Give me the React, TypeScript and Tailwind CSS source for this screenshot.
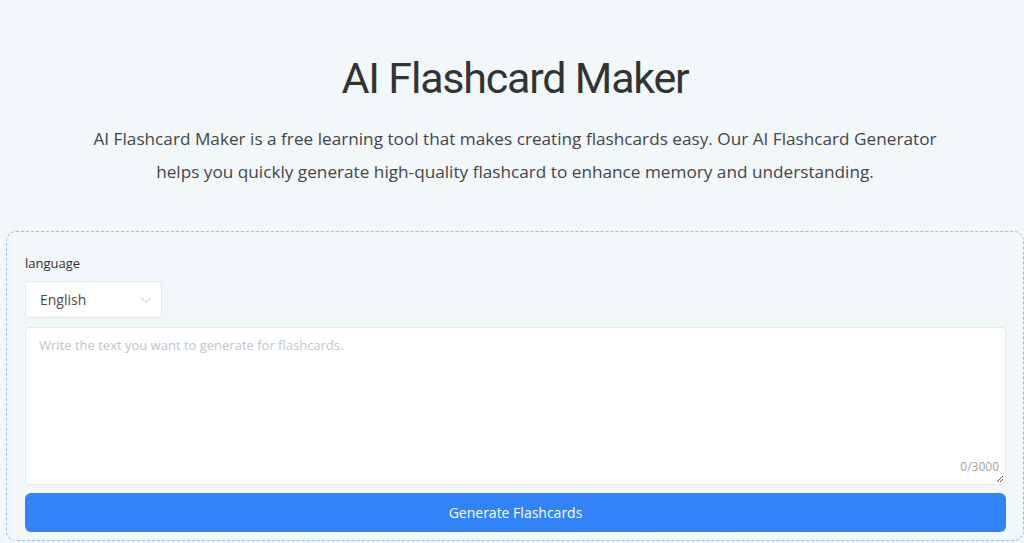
import React from "react";

export default function App() {
  return (
    <div className="min-h-screen bg-[#f2f7fa] font-['Open_Sans',sans-serif]">
      {/* Hero */}
      <div className="pl-[6px] pt-[50px] text-center">
        <h1 className="font-['Roboto',sans-serif] text-[43px] leading-[56px] font-normal tracking-[-1.2px] text-[#333]">
          AI Flashcard Maker
        </h1>
        <p className="mx-auto mt-[16px] max-w-[880px] text-[17.2px] leading-[33px] text-[#454545]">
          AI Flashcard Maker is a free learning tool that makes creating flashcards easy. Our AI Flashcard Generator
          helps you quickly generate high-quality flashcard to enhance memory and understanding.
        </p>
      </div>

      {/* Form card */}
      <div className="ml-[6px] mt-[43px] rounded-[10px] border border-dashed border-[#93bff7] pl-[18px] pr-[17px] pt-[22px] pb-[8px]">
        <div className="text-[13px] leading-[18px] text-[#303133]">language</div>

        <div className="mt-[9px] flex h-[37px] w-[137px] items-center justify-between rounded-[4px] border border-[#e4e7ed] bg-white pl-[14px] pr-[8px]">
          <span className="text-[14px] text-[#4a4a4a]">English</span>
          <svg width="14" height="14" viewBox="0 0 24 24" fill="none" stroke="#b8bcc4" strokeWidth="1.6">
            <path d="M4 8.5l8 7.5 8-7.5" />
          </svg>
        </div>

        <div className="relative mt-[9px] h-[158px] rounded-[4px] border border-[#e4e7ed] bg-white">
          <div className="px-[13px] pt-[7px] text-[13px] leading-[20px] text-[#c0c4cc]">
            Write the text you want to generate for flashcards.
          </div>
          <span className="absolute bottom-[8px] right-[6px] text-[12px] text-[#a0a3a8]">0/3000</span>
          <svg className="absolute bottom-[1px] right-[1px]" width="8" height="8" viewBox="0 0 8 8" stroke="#555" strokeWidth="1">
            <path d="M1 7L7 1M4 7L7 4" />
          </svg>
        </div>

        <button className="mt-[8px] flex h-[39px] w-full items-center justify-center rounded-[6px] bg-[#3183f7] text-[14px] text-white">
          Generate Flashcards
        </button>
      </div>
    </div>
  );
}
